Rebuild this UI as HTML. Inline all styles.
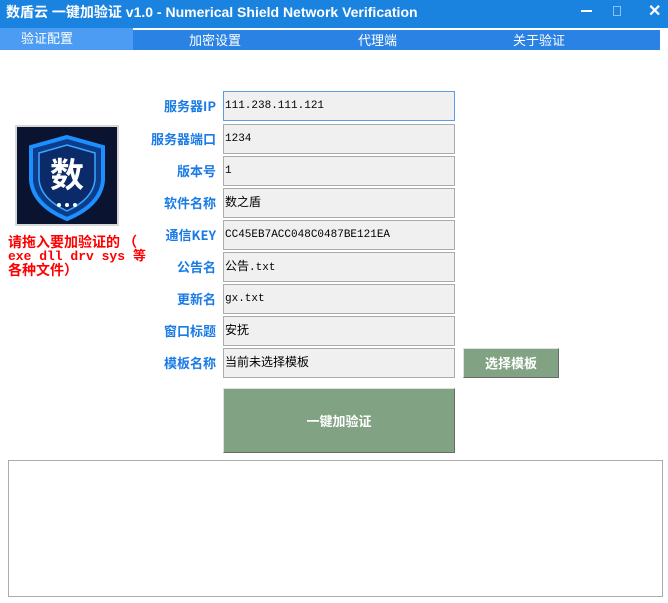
<!DOCTYPE html>
<html><head><meta charset="utf-8"><style>
*{margin:0;padding:0;box-sizing:border-box}
body{width:668px;height:603px;background:#fff;position:relative;overflow:hidden;font-family:"Liberation Sans","Noto Sans CJK SC",sans-serif}
.title{position:absolute;left:0;top:0;width:668px;height:28px;background:#1a83e0;color:#fff;font-size:14px;font-weight:bold;line-height:24px;padding-left:6px}
.tabs{position:absolute;left:0;top:28px;width:668px;height:22px;background:#fff}
.tab{position:absolute;top:2px;height:20px;background:#2a82e4;color:#fff;font-size:13px;line-height:22px}
.lab{position:absolute;right:452px;width:120px;text-align:right;color:#1a7ae6;font-weight:bold;font-size:13px;height:30px;line-height:30px;font-family:"Noto Sans CJK SC",sans-serif}
.f{position:absolute;left:223px;width:232px;height:30px;background:#f0f0f0;border:1px solid #ababab;font-size:11px;line-height:28px;padding-left:1px;font-family:"Liberation Mono","Noto Sans CJK SC",monospace}
.f b{font-weight:normal;font-size:12px}
.btn{position:absolute;background:#82a383;color:#fff;font-weight:bold;font-size:13px;text-align:center;border:1px solid;border-color:#e0e0e0 #6a6a6a #6a6a6a #e0e0e0;font-family:"Noto Sans CJK SC",sans-serif}
.red{position:absolute;left:8px;color:#f00;font-weight:bold;font-size:14px;line-height:13px}
</style></head><body>
<div class="title">数盾云 一键加验证 v1.0 - Numerical Shield Network Verification
<span style="position:absolute;left:581px;top:10px;width:11px;height:2px;background:#fff"></span>
<span style="position:absolute;left:613px;top:6px;width:8px;height:10px;border:1px solid #8cc0f0"></span>
<span style="position:absolute;left:648px;top:0;font-size:16px">✕</span>
</div>
<div class="tabs">
<div class="tab" style="left:0;width:133px;top:0;height:22px;background:#4b9cf2"><span style="margin-left:21px">验证配置</span></div>
<div class="tab" style="left:133px;width:527px"></div>
<div class="tab" style="left:189px;background:none">加密设置</div>
<div class="tab" style="left:358px;background:none">代理端</div>
<div class="tab" style="left:513px;background:none">关于验证</div>
</div>

<svg style="position:absolute;left:15px;top:125px" width="104" height="101" viewBox="0 0 104 101">
<rect x="0" y="0" width="104" height="101" fill="#d8d8d8"/>
<rect x="2" y="2" width="100" height="97" fill="#0a1430"/>
<path d="M52 12 L88 22 L88 55 Q86 80 52 94 Q18 80 16 55 L16 22 Z" fill="#0b3d8a" stroke="#1e8fff" stroke-width="4"/>
<path d="M52 20 L80 28 L80 55 Q78 74 52 86 Q26 74 24 55 L24 28 Z" fill="#0a2a6a" stroke="#3aa6ff" stroke-width="1.5"/>
<text x="52" y="62" text-anchor="middle" fill="#fff" font-size="34" font-weight="bold" font-family="Noto Sans CJK SC,sans-serif">数</text>
<circle cx="44" cy="80" r="2" fill="#fff"/><circle cx="52" cy="80" r="2" fill="#fff"/><circle cx="60" cy="80" r="2" fill="#fff"/>
</svg>
<div class="red" style="top:236px;font-family:'Noto Sans CJK SC',sans-serif">请拖入要加验证的 （</div>
<div class="red" style="top:250px;font-size:13px;font-family:'Liberation Mono','Noto Sans CJK SC',monospace">exe dll drv sys 等</div>
<div class="red" style="top:264px;font-family:'Noto Sans CJK SC',sans-serif">各种文件）</div>

<div class="lab" style="top:91px">服务器IP</div><div class="f" style="top:91px;border-color:#5c9ee6">111.238.111.121</div>
<div class="lab" style="top:124px">服务器端口</div><div class="f" style="top:124px">1234</div>
<div class="lab" style="top:156px">版本号</div><div class="f" style="top:156px">1</div>
<div class="lab" style="top:188px">软件名称</div><div class="f" style="top:188px"><b>数之盾</b></div>
<div class="lab" style="top:220px">通信KEY</div><div class="f" style="top:220px">CC45EB7ACC048C0487BE121EA</div>
<div class="lab" style="top:252px">公告名</div><div class="f" style="top:252px"><b>公告</b>.txt</div>
<div class="lab" style="top:284px">更新名</div><div class="f" style="top:284px">gx.txt</div>
<div class="lab" style="top:316px">窗口标题</div><div class="f" style="top:316px"><b>安抚</b></div>
<div class="lab" style="top:348px">模板名称</div><div class="f" style="top:348px"><b>当前未选择模板</b></div>
<div class="btn" style="left:463px;top:348px;width:96px;height:30px;line-height:28px">选择模板</div>
<div class="btn" style="left:223px;top:388px;width:232px;height:65px;line-height:63px">一键加验证</div>
<div style="position:absolute;left:8px;top:460px;width:655px;height:137px;border:1px solid #ababab"></div>
</body></html>
